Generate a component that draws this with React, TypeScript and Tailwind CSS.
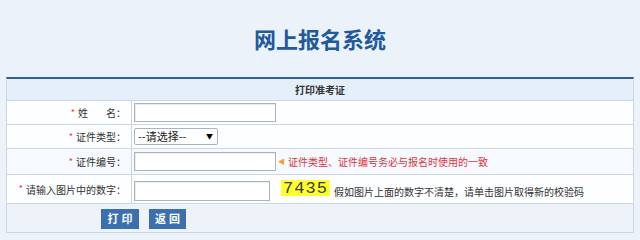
const cjk = "font-['Microsoft_YaHei','Noto_Sans_CJK_SC',sans-serif]"

function Label({ text, star = true }: { text: React.ReactNode; star?: boolean }) {
  return (
    <div className="flex items-center justify-end border-r border-[#cdd7e2] pr-[5px] text-[10px] text-[#333]">
      {star && <span className="mr-[3px] text-[9px] text-[#e33]">*</span>}
      {text}
      <span>：</span>
    </div>
  )
}

function TextInput({ w = "w-[142px]", h = "h-[19px]" }: { w?: string; h?: string }) {
  return <input type="text" className={`${w} ${h} border border-[#a9b4bf] bg-white shadow-[inset_1px_1px_1px_rgba(0,0,0,0.08)] outline-none`} />
}

export default function App() {
  return (
    <div className={`${cjk} h-[240px] w-[640px] overflow-hidden bg-[#ebf2f9]`}>
      <div className="flex h-[77px] items-center justify-center pb-[1px]">
        <h1 className="text-[22px] font-bold text-[#22599a]">网上报名系统</h1>
      </div>
      <div className="mx-[6px] border-x border-b border-t-2 border-x-[#cdd7e2] border-b-[#cdd7e2] border-t-[#2f6296] bg-white">
        <div className="flex h-[22px] items-center justify-center border-b border-[#cdd7e2] bg-[#e5effa] text-[10px] font-bold text-[#333]">
          打印准考证
        </div>
        <div className="grid h-[24px] grid-cols-[125px_1fr] border-b border-[#cdd7e2] bg-[#fdfeff]">
          <Label text={<span className="flex w-[38px] justify-between"><span>姓</span><span>名</span></span>} />
          <div className="flex items-center pl-[2px]">
            <TextInput />
          </div>
        </div>
        <div className="grid h-[24px] grid-cols-[125px_1fr] border-b border-[#cdd7e2] bg-[#fdfeff]">
          <Label text="证件类型" />
          <div className="flex items-center pl-[2px]">
            <div className="flex h-[17px] w-[84px] items-center justify-between rounded-[2px] border border-[#a9b4bf] bg-white pl-[3px] pr-[4px] text-[11px] text-[#222]">
              <span>--请选择--</span>
              <span className="text-[7px] text-black">▼</span>
            </div>
          </div>
        </div>
        <div className="grid h-[26px] grid-cols-[125px_1fr] border-b border-[#cdd7e2] bg-[#f6f9fd]">
          <Label text="证件编号" />
          <div className="flex items-center pl-[2px]">
            <TextInput />
            <span className="ml-[2px] mr-[3px] text-[7px] text-[#f0a030]">◀</span>
            <span className="text-[10px] text-[#e0323c]">证件类型、证件编号务必与报名时使用的一致</span>
          </div>
        </div>
        <div className="grid h-[29px] grid-cols-[125px_1fr] border-b border-[#cdd7e2] bg-[#fdfeff]">
          <Label text="请输入图片中的数字" />
          <div className="flex items-center pl-[2px] pt-[3px]">
            <TextInput w="w-[136px]" h="h-[20px]" />
            <div className="mb-[5px] ml-[11px] flex h-[16px] w-[49px] items-center justify-center bg-[#ffff2e] font-['Liberation_Mono',monospace] text-[17px] leading-none tracking-[1px] text-[#3a3a3a]">
              7435
            </div>
            <span className="ml-[4px] mt-[2px] text-[10px] text-[#333]">假如图片上面的数字不清楚，请单击图片取得新的校验码</span>
          </div>
        </div>
        <div className="flex h-[28px] items-center gap-[10px] bg-[#eef3f9] pl-[94px] pt-[1px]">
          <button className="h-[20px] w-[38px] bg-[#3c6fae] pl-[3px] text-[11px] font-bold tracking-[3px] text-white">打印</button>
          <button className="h-[20px] w-[37px] bg-[#3c6fae] pl-[3px] text-[11px] font-bold tracking-[3px] text-white">返回</button>
        </div>
      </div>
    </div>
  )
}
